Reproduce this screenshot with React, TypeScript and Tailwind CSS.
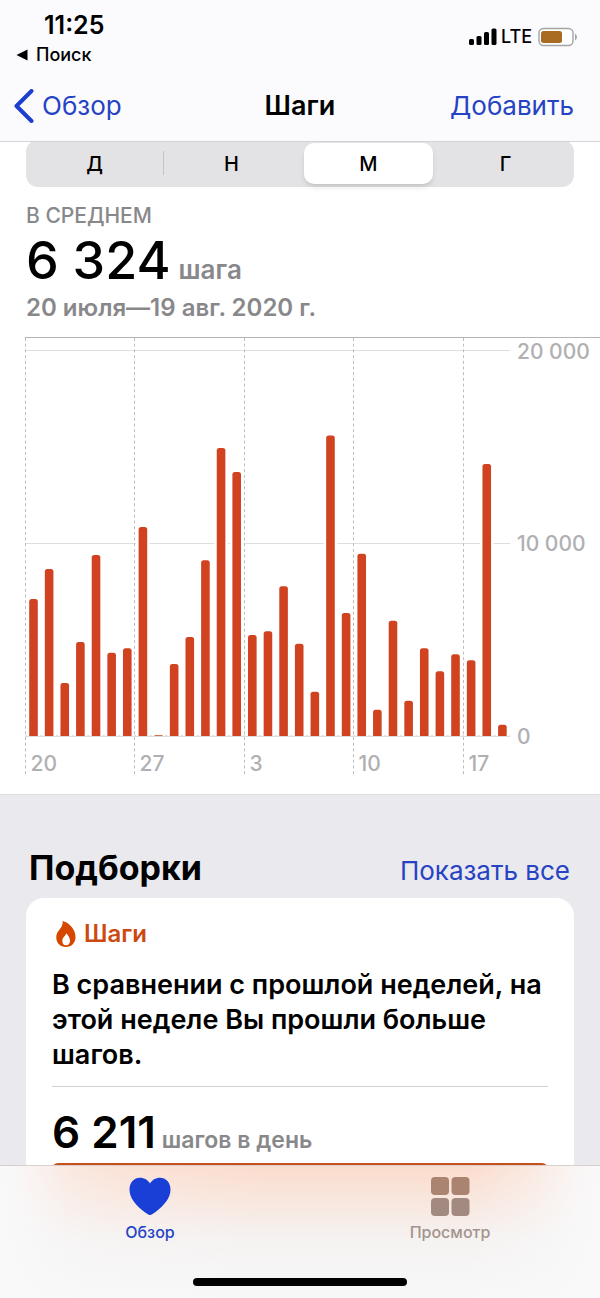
import { useState } from 'react'

const STEPS = [
  7110, 8665, 2750, 4880, 9390, 4320, 4550,
  10845, 40, 3735, 5140, 9115, 14945, 13700,
  5240, 5430, 7770, 4790, 2300, 15585, 6380,
  9460, 1365, 5985, 1830, 4550, 3355, 4240,
  3930, 14115, 585,
]
const WEEKS = ['20', '27', '3', '10', '17']
const LEVELS = [
  { value: 20000, label: '20 000' },
  { value: 10000, label: '10 000' },
  { value: 0, label: '0' },
]
const RANGES = ['Д', 'Н', 'М', 'Г']

const CHART_LEFT = 25.5
const BASELINE = 406
const DAY_WIDTH = 15.63
const BAR_WIDTH = 8.6

const levelY = (steps: number) => BASELINE - (steps * 385.5) / 20000

function barPath(index: number, steps: number) {
  const x = CHART_LEFT + index * DAY_WIDTH + 3.7
  const y = levelY(steps)
  const r = Math.min(2.5, BASELINE - y)
  return `M${x} ${BASELINE}V${y + r}Q${x} ${y} ${x + r} ${y}H${x + BAR_WIDTH - r}Q${x + BAR_WIDTH} ${y} ${x + BAR_WIDTH} ${y + r}V${BASELINE}Z`
}

function StepsChart() {
  return (
    <svg viewBox="0 0 600 464" className="block w-full" role="img" aria-label="Шаги">
      <path d="M25 7.5H600" stroke="#b4b4b4" />
      {LEVELS.map(({ value, label }) => (
        <g key={value}>
          <path d={`M25 ${Math.floor(levelY(value)) + (value ? 0.5 : -0.5)}H510`} stroke="#dedede" />
          <text x="517" y={levelY(value) + 8} className="fill-[#b0b0b2] text-[21px] font-medium">
            {label}
          </text>
        </g>
      ))}
      {WEEKS.map((day, i) => {
        const x = Math.floor(CHART_LEFT + i * 7 * DAY_WIDTH) + 0.5
        return (
          <g key={day}>
            <path d={`M${x} 8V445`} stroke="#bdbdbd" strokeDasharray="3 2.7" />
            <text x={x + 5} y="441" className="fill-[#b0b0b2] text-[21px] font-medium">
              {day}
            </text>
          </g>
        )
      })}
      {STEPS.map((steps, i) => (
        <path key={i} d={barPath(i, steps)} fill="#d04220" stroke="#fff" strokeWidth="5" paintOrder="stroke" />
      ))}
      <path d={`M25 ${BASELINE + 0.5}H510`} stroke="#dedede" />
    </svg>
  )
}

function StatusIcons() {
  return (
    <div className="flex items-center gap-1 pt-1.5">
      <svg width="28" height="18" viewBox="0 0 28 18">
        <rect x="0" y="11" width="5" height="6" rx="1.5" />
        <rect x="7.5" y="8" width="5" height="9" rx="1.5" />
        <rect x="15" y="4" width="5" height="13" rx="1.5" />
        <rect x="22.5" y="0.5" width="5" height="16.5" rx="1.5" />
      </svg>
      <span className="text-lg font-medium">LTE</span>
      <svg className="ml-0.5" width="40" height="20" viewBox="0 0 40 20">
        <rect x="1" y="1.5" width="34" height="17" rx="4.5" fill="#fff" stroke="#a3a3a8" strokeWidth="1.4" />
        <rect x="3" y="4" width="21" height="12" rx="2.5" fill="#a96a22" />
        <path d="M37 6.5Q39 8 39 10T37 13.5Z" fill="#a3a3a8" />
      </svg>
    </div>
  )
}

function Header() {
  return (
    <header className="sticky top-0 z-10 border-b border-[#d3d3d6] bg-[#fbfbfd] pb-px">
      <div className="flex justify-between pr-[22px] pl-4">
        <div>
          <div className="pt-2 pl-7 text-[25px] leading-[35px] font-semibold">11:25</div>
          <a href="#search" className="flex items-center gap-2 text-lg leading-6 font-medium">
            <svg width="12" height="12" viewBox="0 0 12 12">
              <path d="M0.5 6L11.5 0.5V11.5Z" />
            </svg>
            Поиск
          </a>
        </div>
        <StatusIcons />
      </div>
      <nav className="flex items-center pt-1 pr-[26px] pl-[14px] text-[26px] leading-[69px] text-[#2643c4]">
        <a href="#overview" className="flex flex-1 items-center gap-2">
          <svg width="20" height="34" viewBox="0 0 20 34" fill="none" stroke="#1d3fd0" strokeWidth="4" strokeLinecap="round" strokeLinejoin="round">
            <path d="M17.5 2L2.5 17L17.5 32" />
          </svg>
          Обзор
        </a>
        <h1 className="pl-3 text-[27px] font-semibold text-black">Шаги</h1>
        <div className="flex flex-1 justify-end">
          <button>Добавить</button>
        </div>
      </nav>
    </header>
  )
}

function RangePicker() {
  const [active, setActive] = useState('М')
  return (
    <div className="mx-[26px] -mt-0.5 grid grid-cols-4 rounded-xl bg-[#e3e3e5] py-[3px] text-xl">
      {RANGES.map((range, i) => (
        <div key={range} className="relative flex">
          {i === 1 && <span className="absolute top-2 left-0 h-6 w-px bg-[#c4c4c8]" />}
          <button
            onClick={() => setActive(range)}
            className={`mx-1 h-[41px] flex-1 rounded-[10px] font-medium ${active === range ? 'bg-white shadow-md' : ''}`}
          >
            {range}
          </button>
        </div>
      ))}
    </div>
  )
}

function Highlights() {
  return (
    <section className="flex flex-1 flex-col border-t border-[#dcdce0] bg-[#eae9ee] px-[26px] pt-[52px]">
      <div className="flex items-baseline justify-between pr-1 pl-[3px]">
        <h2 className="text-[34px] leading-[42px] font-bold">Подборки</h2>
        <a href="#all" className="text-[26px] text-[#2643c4]">Показать все</a>
      </div>
      <article className="mt-2 flex-1 rounded-t-[18px] bg-white px-[26px] pt-5">
        <h3 className="flex items-center gap-2 pl-1 text-2xl leading-8 font-semibold text-[#cc4a12]">
          <svg width="20" height="26" viewBox="0 0 20 26">
            <path
              fill="#d54600"
              fillRule="evenodd"
              d="M6.5 0C12.5 1 19.5 8 19.5 16C19.5 22 15.5 26 10 26C4.3 26 0.3 22 0.3 16.5C0.3 11.5 3 9.5 5 6.5C6.4 4.3 7 2.5 6.5 0ZM10.2 12.2C10 14.5 6.3 16 6.3 20C6.3 22.8 7.8 24.3 10.2 24.3C12.6 24.3 14 22.6 14 20C14 16.5 12 14 10.2 12.2Z"
            />
          </svg>
          Шаги
        </h3>
        <p className="mt-[17px] text-[27px] leading-[35px] font-semibold">
          В сравнении с прошлой неделей, на этой неделе Вы прошли больше шагов.
        </p>
        <div className="mt-[14px] flex items-baseline gap-1.5 border-t border-[#d2d2d5] pt-[18px]">
          <span className="text-[44px] leading-[54px] font-semibold">6 211</span>
          <span className="text-[23px] font-semibold text-[#88888b]">шагов в день</span>
        </div>
        <div className="mt-1 h-16 rounded-md bg-[#c8501c]" />
      </article>
    </section>
  )
}

function TabBar() {
  return (
    <nav className="fixed inset-x-0 bottom-0 z-10 border-t border-[#d8d0ce] bg-linear-to-b from-[#fbdccd] via-[#f5f2f1] via-55% to-[#f8f8f9]">
      <div className="bg-[linear-gradient(to_right,#f9f9fa,#f9f9fadd_4%,#f9f9fa66_12%,#f9f9fa33_20%,transparent_45%,transparent_78%,#f9f9fa66_88%,#f9f9fadd_96%,#f9f9fa)] pb-3">
        <div className="grid grid-cols-2 text-base leading-5 font-medium">
          <a href="#overview" className="flex flex-col items-center gap-1.5 pt-2.5 text-[#2643c4]">
            <svg width="42" height="40" viewBox="0 0 42 40">
              <path
                fill="#193fd6"
                d="M21 39C19.5 39 17.5 37.5 15.5 36C7 29.5 0.5 22 0.5 13.5C0.5 6.5 5 1.7 11 1.7C15.5 1.7 19 4 21 7.5C23 4 26.5 1.7 31 1.7C37 1.7 41.5 6.5 41.5 13.5C41.5 22 35 29.5 26.5 36C24.5 37.5 22.5 39 21 39Z"
              />
            </svg>
            Обзор
          </a>
          <a href="#browse" className="flex flex-col items-center gap-1.5 pt-2.5 text-[#a3938e]">
            <svg width="40" height="40" viewBox="0 0 40 40">
              <rect x="1" y="1" width="18" height="18" rx="4" fill="#aa8471" />
              <rect x="21.5" y="1" width="18" height="18" rx="4" fill="#aa8471" />
              <rect x="1" y="22" width="18" height="18" rx="4" fill="#a38a80" />
              <rect x="21.5" y="22" width="18" height="18" rx="4" fill="#a38a80" />
            </svg>
            Просмотр
          </a>
        </div>
        <div className="mx-auto mt-9 h-2 w-[214px] rounded-full bg-black" />
      </div>
    </nav>
  )
}

export default function App() {
  return (
    <div className="flex min-h-screen flex-col bg-white font-['Inter','Liberation_Sans',sans-serif] text-black">
      <Header />
      <main className="flex flex-1 flex-col">
        <RangePicker />
        <section className="px-[26px] pt-[17px] font-semibold text-[#88888b]">
          <div className="text-[21px] leading-6 font-medium">В СРЕДНЕМ</div>
          <div className="flex items-baseline gap-2">
            <span className="text-[52px] leading-[66px] font-medium text-black">6 324</span>
            <span className="text-[26px]">шага</span>
          </div>
          <div className="text-2xl leading-7">20 июля—19 авг. 2020 г.</div>
        </section>
        <div className="mt-2">
          <StepsChart />
        </div>
        <Highlights />
      </main>
      <TabBar />
    </div>
  )
}
